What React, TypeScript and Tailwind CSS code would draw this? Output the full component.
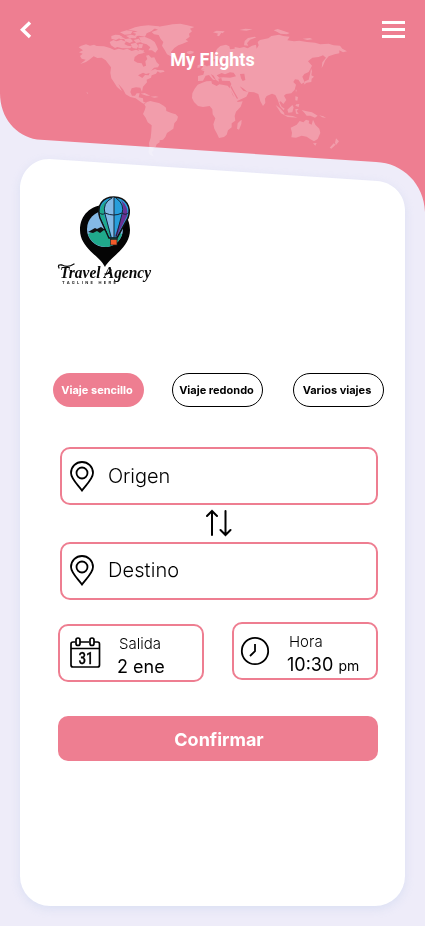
import type { ReactNode } from "react";

const LAND = [
  // North America
  "M236 142L244 137L258 133L270 137L282 134L290 138L312 139L330 144L343 150L356 146L370 149L382 146L395 153L408 149L420 154L432 150L429 160L415 163L404 171L402 182L412 188L425 190L430 200L438 197L436 184L442 177L438 167L446 165L454 173L463 172L470 187L478 194L474 202L462 203L453 212L465 207L472 210L490 211L494 215L480 218L473 214L468 221L455 226L453 233L440 239L441 247L429 260L426 276L421 263L408 262L395 265L391 276L396 287L405 287L410 280L419 280L416 292L429 295L430 305L438 308L430 311L418 303L407 295L391 291L377 283L370 269L355 251L366 274L351 261L341 245L334 235L331 219L333 202L326 193L317 181L305 173L292 174L281 169L267 180L258 186L241 192L257 179L245 176L240 168L248 161L237 157L249 151Z",
  // Arctic islands
  "M334 108L346 104L358 105L367 110L358 115L348 120L334 116Z",
  "M329 126L340 120L350 124L363 119L378 125L373 132L383 137L396 139L391 145L366 145L352 141L345 144L333 136Z",
  "M360 97L380 91L398 94L392 103L374 104ZM378 107L394 104L411 109L407 115L388 114ZM372 118L391 115L399 124L389 129L376 124ZM392 132L408 128L415 138L410 146L398 144ZM401 120L416 116L424 126L409 129ZM350 111L367 112L377 116L362 118ZM416 132L429 133L426 144L415 145Z",
  "M384 90L405 82L423 78L445 76L467 78L479 79L463 86L454 94L440 100L435 110L417 107L404 109L408 101L398 98L413 94Z",
  "M417 112L435 111L452 118L464 126L470 138L474 148L466 158L456 151L445 151L451 142L440 133L425 129ZM414 148L426 151L435 158L420 156Z",
  // Greenland
  "M455 96L474 89L460 84L484 79L506 75L517 73L541 71L562 76L583 81L570 86L576 94L567 101L569 110L557 119L565 124L548 131L535 136L523 144L513 156L515 170L501 163L494 150L486 137L490 126L482 117L476 105L462 103Z",
  "M561 155L571 152L582 155L579 160L568 163L560 159Z",
  // Caribbean
  "M422 281L434 279L451 287L440 287ZM451 290L467 289L476 291L464 293ZM259 275L265 280L262 281Z",
  // South America
  "M433 313L441 306L451 303L463 306L477 309L491 317L498 323L499 333L514 339L527 343L534 350L531 361L523 370L520 386L510 393L501 399L496 411L489 419L479 421L479 427L470 433L467 441L460 444L461 452L455 457L462 470L449 464L445 455L448 441L447 429L452 413L454 394L455 376L443 367L437 353L429 342L434 331L437 320Z",
  // Africa
  "M593 254L607 248L619 244L634 243L636 251L650 258L658 253L683 257L691 267L698 285L708 298L713 306L728 304L722 320L708 335L704 348L706 362L695 370L695 382L684 391L680 404L672 411L657 414L651 401L643 386L640 373L646 355L638 343L637 328L629 318L609 321L594 318L582 306L576 294L577 280L584 266Z",
  "M720 363L725 359L724 372L717 389L711 386L713 370Z",
  // Europe and Asia
  "M594 228L610 224L613 214L602 209L615 207L623 197L638 196L637 185L643 181L647 194L671 190L684 183L681 174L691 169L676 171L674 181L664 188L656 179L647 178L639 176L643 162L651 147L661 138L678 134L688 139L690 148L704 146L704 141L719 144L732 141L743 145L756 137L768 134L770 146L776 136L773 126L780 120L805 115L814 108L837 104L850 108L869 110L862 121L882 124L898 122L921 126L945 128L961 133L986 131L1001 136L1020 137L1027 146L1041 154L1029 157L1018 151L1018 160L1004 163L986 169L976 181L969 197L965 204L967 187L978 173L969 166L956 171L937 173L924 184L936 197L926 216L913 222L907 230L914 247L904 252L895 239L885 238L880 246L888 254L884 269L874 280L858 282L852 287L859 300L850 312L842 304L838 306L845 320L854 326L851 331L840 319L833 299L826 285L816 281L800 288L795 296L796 309L789 318L781 304L775 282L762 277L742 275L729 265L719 259L730 272L746 277L739 290L723 298L710 304L700 286L689 264L694 252L689 243L666 242L664 234L655 236L657 245L648 240L641 227L632 222L640 234L647 240L639 239L627 225L617 227L609 242L594 243Z",
  "M603 190L607 185L613 187L612 194L621 199L617 206L603 208L609 200ZM593 196L601 193L601 202L592 204Z",
  "M732 136L734 123L744 114L764 110L769 112L750 119L741 130L745 137ZM639 97L650 92L674 94L668 100L664 98L657 109L650 106L655 101ZM718 90L736 86L758 88L739 92ZM821 91L833 87L849 92L869 99L861 103L841 101L832 96ZM908 116L930 114L938 118L922 120Z",
  // Japan and the Philippines
  "M931 218L933 205L936 214L934 226L942 230L935 236L934 246L920 248L911 254L915 244L926 239ZM887 269L890 269L888 278ZM886 289L894 291L892 302L886 301ZM889 313L898 312L896 321L886 317Z",
  // Indonesia and New Guinea
  "M827 315L840 325L852 338L854 346L843 340ZM852 345L878 348L893 353L863 351ZM862 329L877 315L881 322L877 337L865 338ZM886 327L896 327L890 333L896 342L888 341ZM905 330L917 333L936 337L953 347L945 353L931 347L920 347L913 338ZM957 346L970 349L978 354L967 352Z",
  // Australia and New Zealand
  "M872 383L890 374L899 363L910 367L918 359L928 362L926 370L935 374L939 359L946 374L958 386L961 399L953 417L942 424L930 417L920 410L905 407L888 413L874 412L876 398ZM939 430L950 429L946 437ZM1008 415L1017 424L1008 435L1005 428ZM1001 430L1007 434L994 446L989 443Z",
].join("");

const WATER =
  "M650 226L665 219L675 223L690 217L701 218L708 229L690 233L670 232L658 233ZM720 222L733 221L736 240L728 243L723 235ZM691 261L711 297L714 295L702 274L694 258ZM414 226L429 218L438 222L449 219L446 226L435 225L427 234L421 230Z";

function WorldMap() {
  return (
    <svg viewBox="0 0 1275 480" className="absolute left-0 top-0 h-[160px] w-[425px]" aria-hidden="true">
      <defs>
        <mask id="seas">
          <rect width="1275" height="480" fill="white" />
          <path d={WATER} fill="black" />
        </mask>
      </defs>
      <path d={LAND} fill="white" fillOpacity=".245" mask="url(#seas)" />
    </svg>
  );
}

function Logo() {
  return (
    <svg width="98" height="92" viewBox="56 195 98 92" className="block overflow-visible" aria-label="Travel Agency">
      <path d="M105 267C100 256 80 248 80 230C80 215 91 205 105 205C120 205 130 216 130 230C130 248 110 257 105 267Z" fill="#050505" />
      <circle cx="105" cy="229" r="18" fill="#84b9e5" />
      <path d="M88 234Q103 226 122 234Q119 246 106 247Q92 246 88 234Z" fill="#20a98b" />
      <path d="M88 232L95 228L97 229L101 227L104 229L108 227L112 231L121 233L113 231L109 233L104 230L100 233L97 231L93 233Z" fill="#111" />
      <path d="M109 238L100 218C96 205 103 197 114 197C126 197 132 207 128 218L117 238Z" fill="#279edb" stroke="#111" strokeWidth="1.6" />
      <path d="M107 200Q98 207 100 215L109 236L111 236L104 215Q103 207 107 200Z" fill="#20a98b" />
      <path d="M121 200Q129 207 127 216L117 236L115 236L122 216Q125 208 121 200Z" fill="#6a3294" />
      <path d="M114 197Q103 201 105 214L112 237H114Z" fill="#84b9e5" />
      <path d="M114 197V238M112 198Q102 203 105 214L111 237M116 198Q125 204 122 214L116 237M99 212Q102 216 105 213Q114 217 122 213Q126 216 129 212M111 237V240M117 237V240" fill="none" stroke="#152637" strokeWidth="1" />
      <rect x="110.5" y="239.5" width="6.5" height="5.5" fill="#f25b2a" stroke="#222" strokeWidth=".7" />
      <path d="M59 268Q57 264 62 265Q68 268 74 264M111 270Q107 275 105 274" fill="none" stroke="#090909" strokeWidth="1.3" strokeLinecap="round" />
      <text x="60" y="278" textLength="91" lengthAdjust="spacingAndGlyphs" fill="#090909" className="font-['Liberation_Serif',serif] text-[17px] font-bold italic">Travel Agency</text>
      <text x="62" y="284" textLength="54" lengthAdjust="spacing" fill="#222" className="font-['Inter',sans-serif] text-[4px] font-bold">TAGLINE HERE</text>
    </svg>
  );
}

function Pin() {
  return (
    <svg width="24" height="31" viewBox="0 0 24 31" fill="none" stroke="black" strokeWidth="1.8">
      <path d="M12 29.5C9 25 1 18 1 12A11 11 0 0 1 23 12C23 18 15 25 12 29.5Z" />
      <circle cx="12" cy="12" r="5.5" />
    </svg>
  );
}

function Place({ children }: { children: ReactNode }) {
  return (
    <button className="ml-[2px] flex h-[58px] w-[318px] items-center rounded-[10px] border-2 border-[#ee7e91] pl-2 text-left text-xl font-light">
      {children}
    </button>
  );
}

function Calendar() {
  return (
    <svg width="32" height="32" viewBox="0 0 32 32" fill="none" stroke="black" strokeWidth="1.7">
      <path d="M6.500 5H4Q2 5 2 7V28Q2 30 4 30H28.500Q30.500 30 30.500 28V7Q30.500 5 28.500 5H25M11 5H20M2 11.500H30.500" />
      <rect x="7" y="1" width="4" height="7.500" rx="2" />
      <rect x="21" y="1" width="4" height="7.500" rx="2" />
      <text x="9.500" y="27" textLength="15" lengthAdjust="spacingAndGlyphs" fill="black" stroke="black" strokeWidth=".3" className="font-['Roboto',sans-serif] text-[17px] font-medium">31</text>
    </svg>
  );
}

function Clock() {
  return (
    <svg width="30" height="30" viewBox="0 0 30 30" fill="none" stroke="black" strokeWidth="1.8">
      <circle cx="15" cy="15" r="13.200" />
      <path d="M15 8V15.200L10 20" />
    </svg>
  );
}

export default function App() {
  return (
    <main className="relative h-[926px] w-[425px] overflow-hidden bg-[#eeecf9] font-['Inter',sans-serif] text-black">
      <div className="absolute left-0 top-0 h-[214px] w-[425px] bg-[#ee7e91] [clip-path:path('M0_0H425V212C424_184_403_163_376_162L37_139.5C16_136_0_118_0_93Z')]" />
      <WorldMap />
      <header className="relative h-[159px]">
        <div className="flex items-start justify-between px-5 pt-[21px]">
          <button aria-label="Volver">
            <svg width="12" height="18" viewBox="0 0 12 18" fill="none" stroke="white" strokeWidth="3.4"><path d="M10 1.500L2.400 8.700L10 16" /></svg>
          </button>
          <button aria-label="Menú" className="flex w-[23px] flex-col gap-1">
            <span className="h-[3px] w-full bg-white" />
            <span className="h-[3px] w-full bg-white" />
            <span className="h-[3px] w-full bg-white" />
          </button>
        </div>
        <h1 className="mt-[9px] text-center font-['Roboto',sans-serif] text-lg leading-6 font-bold text-white">My Flights</h1>
      </header>
      <div className="relative ml-5 w-[385px] [filter:drop-shadow(0_3px_5px_rgba(190,205,235,.4))]">
        <section className="h-[747px] bg-white pl-[38px] pt-9 [clip-path:path('M0_30C0_13_13_0_29_0L357_22C373_23_385_36_385_51V717A30_30_0_0_1_355_747H30A30_30_0_0_1_0_717Z')]">
          <div className="-ml-[2px] h-[178px]"><Logo /></div>
          <div className="-ml-[5px] flex h-[34px] text-[11px] font-bold">
            <button className="w-[91px] rounded-full bg-[#ee7e91] pr-[3px] whitespace-nowrap text-white">Viaje sencillo</button>
            <button className="ml-7 w-[91px] rounded-full border border-black pr-[2px] whitespace-nowrap">Viaje redondo</button>
            <button className="ml-[30px] w-[91px] rounded-full border border-black pr-[3px] whitespace-nowrap">Varios viajes</button>
          </div>
          <div className="mt-10">
            <Place>
              <Pin />
              <span className="ml-[14px] tracking-[-.1px]">Origen</span>
            </Place>
            <button aria-label="Intercambiar" className="flex h-[37px] w-[322px] items-center justify-center pb-px">
              <svg width="26" height="28" viewBox="0 0 26 28" fill="none" stroke="black" strokeWidth="2" strokeLinecap="round"><path d="M6 26V2M1 7L6 2L11 7M19.500 2V26M14.500 21L19.500 26L24.500 21" /></svg>
            </button>
            <Place>
              <span className="flex items-center pb-[2px]">
                <Pin />
                <span className="ml-[14px] tracking-[.1px]">Destino</span>
              </span>
            </Place>
          </div>
          <div className="mt-[22px] flex w-[320px] items-start justify-between">
            <button className="mt-[2px] flex h-[58px] w-[146px] rounded-[10px] border-2 border-[#ee7e91] pl-[9px] pt-[11px] text-left">
              <Calendar />
              <span className="-mt-[5px] ml-4 flex flex-col">
                <span className="ml-[2px] text-[15px] leading-[23px] font-light">Salida</span>
                <span className="text-lg leading-6">2 ene</span>
              </span>
            </button>
            <button className="flex h-[58px] w-[146px] rounded-[10px] border-2 border-[#ee7e91] pl-[6px] pt-3 text-left">
              <Clock />
              <span className="-mt-[6px] ml-[17px] flex flex-col">
                <span className="ml-[2px] text-[15px] leading-[23px] font-light">Hora</span>
                <span className="text-lg leading-6 whitespace-nowrap">10:30 <span className="text-[14px]">pm</span></span>
              </span>
            </button>
          </div>
          <button className="mt-[34px] block h-[45px] w-[320px] rounded-[10px] bg-[#ee7e91] pl-[2px] pt-[2px] text-lg font-bold text-white">Confirmar</button>
        </section>
      </div>
    </main>
  );
}
